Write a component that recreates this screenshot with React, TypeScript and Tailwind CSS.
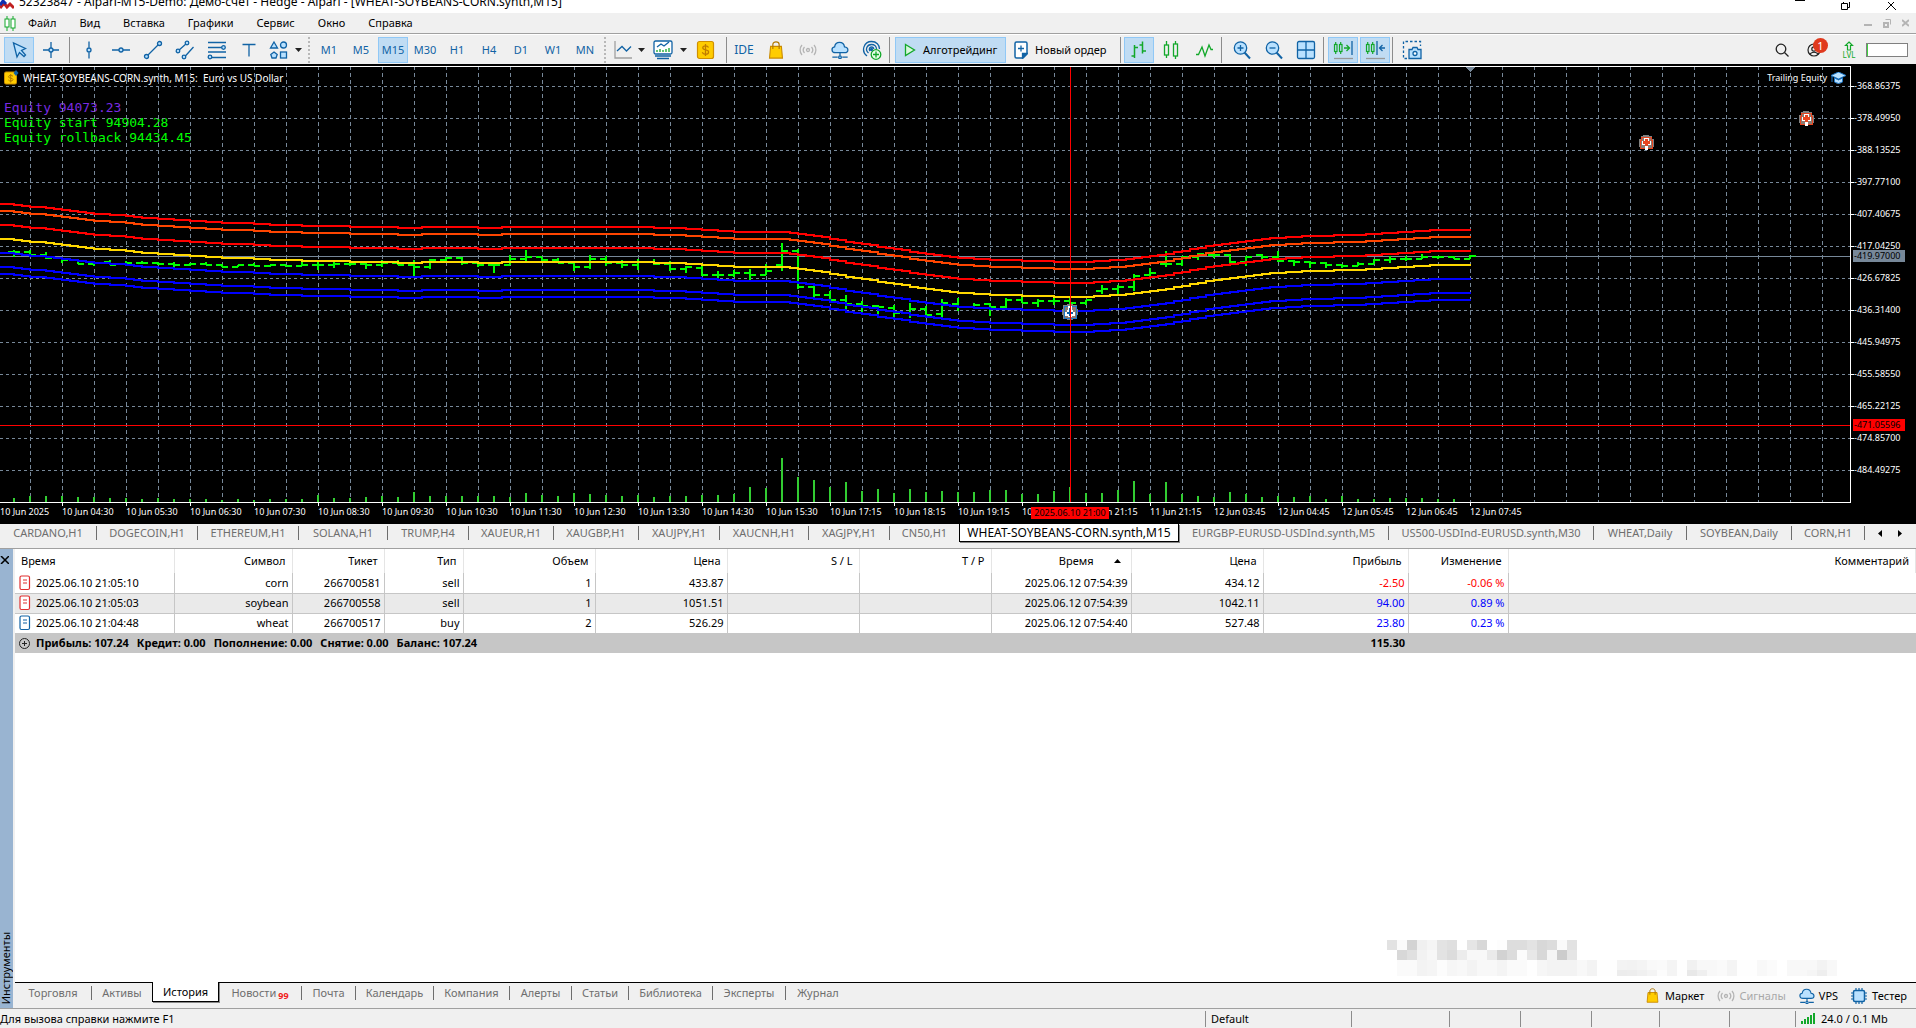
import React from "react";

const FONT = "font-['Noto_Sans','Open_Sans',sans-serif]";

/* ---------- chart data ---------- */

const BAR_STEP = 16;
const FIRST_BAR = 14;

// [bar index, y] of the upper envelope; the other envelopes run parallel to it
const ENVELOPE: [number, number][] = [
  [-1, 204], [0, 205], [1, 207], [2, 208], [3, 210], [4, 212], [5, 214], [6, 215], [7, 216], [8, 218], [9, 219],
  [10, 220], [11, 221], [12, 222], [13, 223], [14, 223], [15, 224], [16, 225], [17, 225], [18, 226], [20, 226],
  [21, 227], [23, 227], [24, 228], [25, 228], [26, 227], [28, 227], [29, 228], [30, 228], [31, 227], [39, 227],
  [40, 228], [41, 228], [42, 229], [43, 230], [44, 231], [45, 232], [48, 232], [49, 234], [50, 236], [51, 239],
  [52, 242], [53, 244], [54, 247], [55, 249], [56, 252], [57, 254], [58, 256], [59, 258], [60, 259], [61, 260],
  [62, 260], [63, 261], [64, 261], [65, 262], [67, 262], [68, 261], [69, 260], [70, 258], [71, 256], [72, 254],
  [73, 251], [74, 248], [75, 245], [76, 243], [77, 241], [78, 239], [79, 238], [80, 237], [81, 236], [82, 236],
  [83, 235], [84, 235], [85, 234], [86, 233], [87, 232], [88, 231], [89, 230], [91, 230],
];

const BANDS: [number, string][] = [
  [0, "#ff0000"],
  [7, "#ff4500"],
  [21, "#ff0000"],
  [49, "#0000ff"],
  [63, "#0000ff"],
  [70, "#0000ff"],
  [35, "#ffd700"],
];

// open, high, low, close in thirds of a pixel below y = 180
const BARS: [number, number, number, number][] = [
  [215, 210, 231, 216], [216, 211, 222, 224], [224, 216, 236, 234], [234, 231, 248, 240], [240, 237, 253, 252],
  [252, 244, 258, 249], [247, 240, 256, 255], [252, 243, 253, 249], [249, 243, 250, 249], [249, 245, 254, 252],
  [252, 246, 261, 255], [255, 250, 257, 252], [252, 246, 255, 255], [255, 253, 262, 261], [261, 255, 262, 255],
  [255, 250, 259, 258], [258, 254, 258, 255], [255, 254, 258, 258], [258, 246, 258, 255], [255, 246, 270, 255],
  [255, 246, 264, 252], [252, 246, 258, 252], [252, 250, 267, 255], [255, 240, 262, 249], [249, 240, 256, 255],
  [255, 240, 288, 261], [261, 238, 267, 240], [240, 232, 242, 234], [234, 231, 255, 249], [249, 247, 262, 255],
  [255, 253, 279, 255], [255, 225, 256, 237], [237, 210, 243, 231], [231, 230, 250, 240], [240, 234, 250, 249],
  [249, 247, 273, 261], [261, 225, 267, 237], [237, 228, 258, 249], [249, 240, 264, 255], [255, 238, 270, 246],
  [246, 238, 255, 252], [252, 243, 273, 267], [267, 258, 279, 261], [264, 258, 288, 285], [285, 273, 297, 285],
  [285, 270, 291, 279], [279, 267, 300, 285], [285, 252, 286, 273], [255, 189, 273, 213], [213, 207, 327, 321],
  [321, 318, 354, 345], [345, 333, 360, 360], [360, 345, 396, 372], [372, 363, 402, 378], [378, 376, 408, 381],
  [384, 375, 411, 399], [399, 369, 414, 387], [387, 378, 405, 405], [402, 357, 411, 369], [372, 354, 393, 381],
  [381, 369, 383, 375], [372, 370, 408, 381], [381, 354, 383, 360], [360, 351, 369, 369], [369, 357, 381, 363],
  [363, 354, 375, 363], [363, 348, 375, 369], [369, 360, 375, 360], [333, 315, 342, 327], [327, 315, 345, 321],
  [321, 282, 333, 288], [285, 264, 294, 279], [252, 213, 261, 252], [252, 228, 258, 231], [231, 219, 240, 223],
  [225, 222, 234, 225], [225, 223, 249, 246], [246, 228, 258, 231], [225, 222, 243, 231], [231, 213, 246, 243],
  [243, 241, 258, 246], [246, 244, 264, 249], [249, 247, 264, 255], [255, 252, 264, 258], [258, 246, 258, 252],
  [252, 236, 252, 240], [240, 228, 249, 237], [237, 228, 243, 237], [237, 222, 238, 231], [231, 230, 232, 231],
  [231, 228, 238, 237], [237, 225, 238, 228],
];

const VOLUMES = [
  4, 6, 6, 6, 5, 5, 4, 4, 3, 4, 3, 3, 3, 2, 3, 2, 3, 3, 3, 7, 4, 4, 5, 6, 5, 10, 6, 6, 6, 6, 6, 5, 9, 7, 6, 9, 8, 7,
  6, 7, 5, 6, 6, 7, 7, 8, 15, 14, 44, 25, 22, 15, 20, 11, 13, 9, 13, 10, 11, 10, 10, 12, 12, 8, 8, 11, 15, 9, 9, 12,
  21, 8, 20, 8, 6, 5, 10, 8, 5, 6, 5, 6, 3, 6, 3, 3, 4, 4, 4, 3, 3,
];

const TOP = 67; // page row where the plot begins; data rows are given from the page's top

function barX(k: number) {
  return FIRST_BAR + BAR_STEP * k;
}

function envelopeAt(k: number) {
  for (let i = 0; i < ENVELOPE.length - 1; i++) {
    const [a, ya] = ENVELOPE[i];
    const [b, yb] = ENVELOPE[i + 1];
    if (k >= a && k <= b) return ya + ((yb - ya) * (k - a)) / (b - a);
  }
  return 230;
}

function envelopePath(offset: number) {
  let d = "";
  for (let k = -1; k < 91; k += 0.5) {
    const y = Math.floor(envelopeAt(k)) + offset - TOP;
    d += d ? `V${y}` : `M${barX(k)} ${y}`;
    d += `H${barX(k + 0.5)}`;
  }
  return d;
}

const px = (v: number) => 180 - TOP + Math.round(v / 3);

const PRICES = [
  "-368.86375", "-378.49950", "-388.13525", "-397.77100", "-407.40675", "-417.04250", "-426.67825", "-436.31400",
  "-445.94975", "-455.58550", "-465.22125", "-474.85700", "-484.49275",
];

const TIMES = [
  "10 Jun 04:30", "10 Jun 05:30", "10 Jun 06:30", "10 Jun 07:30", "10 Jun 08:30", "10 Jun 09:30", "10 Jun 10:30",
  "10 Jun 11:30", "10 Jun 12:30", "10 Jun 13:30", "10 Jun 14:30", "10 Jun 15:30", "10 Jun 17:15", "10 Jun 18:15",
  "10 Jun 19:15", "10 Jun 20:15", "10 Jun 21:15", "11 Jun 21:15", "12 Jun 03:45", "12 Jun 04:45", "12 Jun 05:45",
  "12 Jun 06:45", "12 Jun 07:45",
];

function SellMark({ x, y }: { x: number; y: number }) {
  return (
    <g transform={`translate(${x - 7} ${y - 7})`} shapeRendering="crispEdges">
      <path d="M4 0h6v1h3v3h2v8H0V4h2V1h2z" fill="#808080" />
      <path d="M2 2h10v3h1v8H1V5h1z" fill="#8c7a72" stroke="#e8451f" strokeWidth="1" />
      <path d="M5 3h5v3h2v4H9v5H6v-5H3V6h2z" fill="#ffffff" />
      <path d="M6 4h3v2h2v3H9v2H6V9H4V6h2z" fill="#e8451f" />
    </g>
  );
}

function BuyMark({ x, y }: { x: number; y: number }) {
  return (
    <g transform={`translate(${x - 7} ${y - 7})`} shapeRendering="crispEdges">
      <path d="M4-1h6v1h4v4h1v6h-1v4h-4v1H4v-1H0v-4h-1V4h1V0h4z" fill="#808080" />
      <rect x="1" y="1" width="12" height="12" fill="#8c7a72" stroke="#1f78c8" strokeWidth="1" />
      <path d="M5 1h4v4h1v2h2v4H9v1H5v-1H2V7h2V5h1z" fill="#ffffff" />
      <path d="M6 3h2v4h2v2H8v2H6V9H4V7h2z" fill="#0a5fa8" />
    </g>
  );
}

function Plot() {
  const columns = Array.from({ length: 57 }, (_, i) => 30 + 32 * i);
  const rows = PRICES.map((_, i) => 19 + 32 * i);
  return (
    <svg className="absolute inset-0 h-full w-full" shapeRendering="crispEdges" aria-label="WHEAT-SOYBEANS-CORN M15">
      <g stroke="#778899" strokeWidth="1">
        {columns.map((x) => (
          <line key={x} x1={x + 0.5} x2={x + 0.5} y1="-1" y2="100%" strokeDasharray="4 3" />
        ))}
        {rows.map((y) => (
          <line key={y} x1="0" x2="100%" y1={y + 0.5} y2={y + 0.5} strokeDasharray="3 3" />
        ))}
        <line x1="0" x2="100%" y1="189.5" y2="189.5" />
      </g>
      {VOLUMES.map((v, k) => (
        <rect key={k} x={barX(k) - 1} y={435 - v} width="2" height={v} fill="#32cd32" />
      ))}
      <g fill="#00ff00">
        {BARS.map(([o, h, l, c], k) => (
          <g key={k}>
            <rect x={barX(k) - 1} y={px(h)} width="2" height={Math.max(2, px(l) - px(h))} />
            <rect x={barX(k) - 6} y={px(o) - 1} width="6" height="2" />
            <rect x={barX(k)} y={px(c) - 1} width="6" height="2" />
          </g>
        ))}
      </g>
      <g fill="none" strokeWidth="2">
        {BANDS.map(([offset, color]) => (
          <path key={offset} d={envelopePath(offset)} stroke={color} strokeLinecap="square" />
        ))}
      </g>
      <line x1="0" x2="100%" y1="358.5" y2="358.5" stroke="#ff0000" />
      <SellMark x={1646} y={75} />
      <SellMark x={1806} y={51} />
      <BuyMark x={1070} y={245} />
      <line x1="1070.5" x2="1070.5" y1="0" y2="100%" stroke="#ff0000" />
      <path d="M1466 0h9l-4.5 5z" fill="#778899" />
    </svg>
  );
}

/* ---------- icons ---------- */

const BLUE = "#1163a5";
const PALE = "#b9e1ff";
const GREEN = "#13a82a";

function Icon({ children, w = 20, h = 20 }: { children: React.ReactNode; w?: number; h?: number }) {
  return (
    <svg width={w} height={h} viewBox={`0 0 ${w} ${h}`} fill="none" stroke={BLUE} strokeWidth="1.3" className="shrink-0" aria-hidden="true">
      {children}
    </svg>
  );
}

const CursorIcon = () => (
  <Icon><path d="M4.500 3l3.500 14 2.500-4.500 4.500 4 1.500-1.500-4-4.500 4-2z" fill={PALE} /></Icon>
);
const CrossIcon = () => (
  <Icon><path d="M10 2v6M10 12v6M2 10h6M12 10h6" /><circle cx="10" cy="10" r="2" fill={PALE} /></Icon>
);
const VLineIcon = () => (
  <Icon><path d="M10 1.500v6M10 12.500v6" /><circle cx="10" cy="10" r="2" fill={PALE} /></Icon>
);
const HLineIcon = () => (
  <Icon><path d="M1 10h7M12 10h7" /><circle cx="10" cy="10" r="2" fill={PALE} /></Icon>
);
const TrendIcon = () => (
  <Icon><path d="M3.500 16.500L16.500 3.500" /><circle cx="3.500" cy="16.500" r="2" fill={PALE} /><circle cx="16.500" cy="3.500" r="2" fill={PALE} /></Icon>
);
const ChannelIcon = () => (
  <Icon><path d="M3 11L12 3M9 17.500L18.500 7" /><circle cx="3" cy="11" r="1.800" fill={PALE} /><circle cx="12" cy="3" r="1.800" fill={PALE} /><circle cx="9" cy="17" r="1.800" fill={PALE} /></Icon>
);
const FiboIcon = () => (
  <Icon><path d="M1 2.500h18M1 7.500h14M1 12h18M5 17.500h14" /><circle cx="16.500" cy="7.500" r="1.800" fill={PALE} /><circle cx="3" cy="17" r="1.800" fill={PALE} /></Icon>
);
const TextIcon = () => (
  <Icon><path d="M3.500 4.500h13M10 4.500v12" /></Icon>
);
const ShapesIcon = () => (
  <Icon>
    <g fill={PALE}>
      <path d="M5 2L8.500 8h-7z" /><circle cx="14.500" cy="5" r="3" />
      <path d="M5 12l3.200 2.500-1.200 3.500h-4l-1.200-3.500z" /><rect x="11.500" y="12" width="6" height="6" />
    </g>
  </Icon>
);
const LineMenuIcon = () => (
  <Icon><path d="M2 1v17h17" stroke="#a0a0a0" /><path d="M4 11l5-4.500 4.500 4.500 4.500-4.500" /></Icon>
);
const TemplateIcon = () => (
  <Icon>
    <rect x="1" y="1" width="18" height="13" rx="1.500" fill="#fff" /><path d="M2 16h16M4 18.500h12" />
    <path d="M4 7l4-3 3 2 5-4" /><path d="M4 12v-2M7 12v-3M10 12v-2M13 12v-3M16 12v-4" stroke={GREEN} />
  </Icon>
);
function DollarIcon({ size = 20 }: { size?: number }) {
  return (
    <svg width={size} height={size} viewBox="0 0 20 20" className="shrink-0" aria-hidden="true">
      <rect x="1.500" y="1.500" width="16" height="17" rx="2" fill="#ffcc00" stroke="#d09000" strokeWidth="1.200" />
      <path d="M12.500 7.500c-.5-1.200-1.500-1.700-3-1.700s-2.700.7-2.700 2 1.200 1.800 2.800 2.100 3 .8 3 2.200-1.300 2.200-3.100 2.200-2.800-.7-3.200-2M9.500 4v12" fill="none" stroke="#c07c00" strokeWidth="1.300" />
    </svg>
  );
}
function ChartBadgeIcon() {
  return (
    <svg width="15" height="15" className="shrink-0" aria-hidden="true">
      <rect x="0.500" y="2" width="12" height="12" rx="1.500" fill="#ffcc00" stroke="#d09000" />
      <path d="M9 6.300c-1-1.500-4.500-1.200-4.500.5 0 2 4.500.8 4.500 2.800 0 1.700-3.700 2-4.700.3M6.700 4v8.500" fill="none" stroke="#b07800" />
      <path d="M12 0l2.500 3-2.500 3-2.500-3z" fill="#1163a5" />
    </svg>
  );
}
function BagIcon({ size = 20 }: { size?: number }) {
  return (
    <svg width={size} height={size} viewBox="0 0 20 20" className="shrink-0" aria-hidden="true">
      <path d="M4 6h12l1.200 13H2.800z" fill="#ffcc00" stroke="#c98a00" strokeWidth="1.200" />
      <path d="M6.500 9V4c0-4 7-4 7 0v5" fill="none" stroke="#b07800" strokeWidth="1.300" />
    </svg>
  );
}
const SignalIcon = () => (
  <Icon w={18} h={14}>
    <g stroke="#b4b4b4"><circle cx="9" cy="7" r="1.500" /><path d="M5.500 4c-1.500 1.700-1.500 4.300 0 6M12.500 4c1.500 1.700 1.500 4.300 0 6M3 2C.5 4.700.5 9.300 3 12M15 2c2.500 2.700 2.500 7.300 0 10" /></g>
  </Icon>
);
function CloudIcon({ size = 20 }: { size?: number }) {
  return (
    <svg width={size} height={size} viewBox="0 0 20 20" fill="none" stroke={BLUE} strokeWidth="1.400" className="shrink-0" aria-hidden="true">
      <path d="M5 13c-5 0-5-6-1-6.500C4.500 3 7 1.500 9.500 1.500s5 1.500 5.500 5c5 .5 5 6.500 0 6.500z" fill={PALE} />
      <path d="M10 13v3.500M1.500 18h6M12.500 18h6" /><circle cx="10" cy="18" r="1.500" fill={PALE} />
    </svg>
  );
}
const RadarIcon = () => (
  <Icon>
    <path d="M5 16C-1.500 11 2 1.500 9.500 1.500c5 0 8 3.500 8 7.500" /><path d="M6.500 13C2.500 9.500 5 4.500 9.500 4.500c3 0 5 2 5 4.500" />
    <path d="M8 11c-1.500-2-.5-4 1.500-4 1.500 0 2.200.8 2.300 2" /><circle cx="9.500" cy="9.500" r="1" fill={BLUE} />
    <circle cx="14" cy="14.500" r="4.800" fill="#eaffea" stroke={GREEN} /><path d="M14 11.500v6M11 14.500h6" stroke={GREEN} />
  </Icon>
);
const PlayIcon = () => (
  <Icon w={12} h={14}><path d="M1.500 1.500l9 5.500-9 5.500z" fill="#d8f8dc" stroke={GREEN} /></Icon>
);
const NewOrderIcon = () => (
  <Icon w={14} h={18}><path d="M1 2.500q0-1.500 1.500-1.500h9q1.500 0 1.500 1.500V13l-4 4H2.500Q1 17 1 15.500z" fill="#fff" strokeWidth="1.500" /><path d="M7 4.500v6M4 7.500h6" /><path d="M13 12.500l-4.500 4.500v-4.500z" fill={BLUE} /></Icon>
);
const BarsIcon = () => (
  <Icon><path d="M5.500 5v13M2.500 16h3M5.500 7.500H9M13.500 1.500v12M10.500 5h3M13.500 11H17" stroke={GREEN} strokeWidth="1.500" /></Icon>
);
const CandlesIcon = () => (
  <Icon><path d="M5.500 1v4M5.500 15v3M14.500 1v3M14.500 16v3" stroke={GREEN} /><rect x="3.500" y="5" width="4" height="10" stroke={GREEN} /><rect x="12.500" y="4" width="4" height="12" stroke={GREEN} /></Icon>
);
const WaveIcon = () => (
  <Icon><path d="M2 14.500h2.500L8 7l3 9 4-11 2 4.500h2" stroke={GREEN} /></Icon>
);
function ZoomGlassIcon({ plus }: { plus?: boolean }) {
  return (
    <Icon><path d="M12.500 12.500L18 18.500" strokeWidth="2" /><circle cx="8.500" cy="8" r="6.200" fill={PALE} /><path d={plus ? "M5.500 8h6M8.500 5v6" : "M5.500 8h6"} /></Icon>
  );
}
const TilesIcon = () => (
  <Icon><rect x="1.500" y="1.500" width="17" height="17" rx="1.500" fill={PALE} /><path d="M10 1.500v17M1.500 10h17" /></Icon>
);
function ShiftIcon({ left }: { left?: boolean }) {
  return (
    <Icon w={22} h={20}>
      <path d="M2 18.500h19" stroke="#999" />
      <g stroke={GREEN} strokeWidth="1.200"><rect x="2.500" y="4.500" width="2.500" height="7" /><rect x="7.500" y="4.500" width="2.500" height="7" /><path d="M3.700 2v2.500M3.700 11.500V14M8.700 2v2.500M8.700 11.500V14" /></g>
      {left ? <path d="M13 1v14M21 8h-5M18.500 5l-3 3 3 3" /> : <><path d="M12 8h5M14.500 5l3 3-3 3" stroke={GREEN} /><path d="M20 1v14" /></>}
    </Icon>
  );
}
const CameraIcon = () => (
  <Icon><path d="M5 18.500H1.500v-17h17V6" strokeDasharray="2.500 2" /><path d="M7 9.500h3l1-2h4l1 2h3v9H7z" fill={PALE} /><circle cx="13" cy="13.500" r="2" fill="#fff" /></Icon>
);
const ChipIcon = () => (
  <Icon w={16} h={16}><path d="M5 0v16M8 0v16M11 0v16M0 5h16M0 8h16M0 11h16" strokeWidth="1.200" /><rect x="2.500" y="2.500" width="11" height="11" rx="1.500" fill={PALE} strokeWidth="1.500" /></Icon>
);
function OrderIcon({ color }: { color: string }) {
  return (
    <svg width="12" height="16" viewBox="0 0 12 16" fill="none" stroke={color} strokeWidth="1.200" className="shrink-0" aria-hidden="true">
      <rect x="1" y="1" width="9.500" height="13.500" rx="1.500" fill="#fff" /><path d="M4 5h4M4 8h4" />
    </svg>
  );
}

/* ---------- toolbar ---------- */

function Tool({ label, w = "w-8", active, children }: { label: string; w?: string; active?: boolean; children: React.ReactNode }) {
  return (
    <button
      aria-label={label}
      className={`${w} flex h-[26px] shrink-0 items-center justify-center ${active ? "border border-[#90c8f6] bg-[#c0dcf3]" : ""}`}
    >
      {children}
    </button>
  );
}

function Sep({ w = "w-[5px]" }: { w?: string }) {
  return (
    <div className={`${w} flex h-[26px] shrink-0 pl-px`}><div className="w-px bg-[#8c8c8c]" /></div>
  );
}

function Grip({ w }: { w: string }) {
  return (
    <div className={`${w} flex h-[26px] shrink-0 justify-center`}><div className="border-l-2 border-dotted border-[#b8b8b8]" /></div>
  );
}

function Caret({ w }: { w: string }) {
  return (
    <button aria-label="Список" className={`${w} flex h-[26px] shrink-0 items-center justify-center`}>
      <svg width="7" height="4" aria-hidden="true"><path d="M0 0h7L3.500 4z" fill="#222" /></svg>
    </button>
  );
}

const PERIODS = ["M1", "M5", "M15", "M30", "H1", "H4", "D1", "W1", "MN"];

function Toolbar() {
  return (
    <div className="flex h-[30px] items-center border-t border-white bg-[#f0f0f0] pl-1 pr-2">
      <Tool label="Курсор" w="w-[30px]" active><CursorIcon /></Tool>
      <Tool label="Перекрестие" w="w-[34px]"><CrossIcon /></Tool>
      <Sep />
      <Tool label="Вертикальная линия"><VLineIcon /></Tool>
      <Tool label="Горизонтальная линия"><HLineIcon /></Tool>
      <Tool label="Трендовая линия"><TrendIcon /></Tool>
      <Tool label="Канал"><ChannelIcon /></Tool>
      <Tool label="Фибоначчи"><FiboIcon /></Tool>
      <Tool label="Текст"><TextIcon /></Tool>
      <Tool label="Объекты" w="w-7"><ShapesIcon /></Tool>
      <Caret w="w-[11px]" />
      <Grip w="w-[9px]" />
      {PERIODS.map((p) => (
        <div key={p} className="flex w-8 shrink-0 justify-center text-[#1163a5]">
          <button className={p === "M15" ? "h-[26px] w-[30px] border border-[#90c8f6] bg-[#c0dcf3]" : "h-[26px] w-[30px]"}>{p}</button>
        </div>
      ))}
      <Grip w="w-[7px]" />
      <Tool label="Тип графика" w="w-[29px]"><LineMenuIcon /></Tool>
      <Caret w="w-[9px]" />
      <Tool label="Шаблоны" w="w-[34px]"><TemplateIcon /></Tool>
      <Caret w="w-[7px]" />
      <Tool label="Символы" w="w-[38px]"><DollarIcon /></Tool>
      <Sep w="w-[3px]" />
      <Tool label="IDE"><span className="text-[12px] text-[#1163a5]">IDE</span></Tool>
      <Tool label="Маркет"><BagIcon size={18} /></Tool>
      <Tool label="Сигналы"><SignalIcon /></Tool>
      <Tool label="VPS"><CloudIcon size={18} /></Tool>
      <Tool label="Копирование"><RadarIcon /></Tool>
      <Sep w="w-[7px]" />
      <button className="flex h-[26px] w-[111px] shrink-0 items-center gap-[7px] border border-[#90c8f6] bg-[#c0dcf3] pl-2">
        <PlayIcon />Алготрейдинг
      </button>
      <button className="flex h-[26px] w-[113px] shrink-0 items-center gap-[7px] pl-2"><NewOrderIcon />Новый ордер</button>
      <Sep />
      <Tool label="Бары" w="w-[30px]" active><BarsIcon /></Tool>
      <Tool label="Свечи" w="w-[34px]"><CandlesIcon /></Tool>
      <Tool label="Линия"><WaveIcon /></Tool>
      <Sep w="w-[6px]" />
      <Tool label="Увеличить"><ZoomGlassIcon plus /></Tool>
      <Tool label="Уменьшить"><ZoomGlassIcon /></Tool>
      <Tool label="Плитка"><TilesIcon /></Tool>
      <Sep w="w-[6px]" />
      <Tool label="Автопрокрутка" w="w-[30px]" active><ShiftIcon /></Tool>
      <div className="w-0.5 shrink-0" />
      <Tool label="Сдвиг графика" w="w-[30px]" active><ShiftIcon left /></Tool>
      <div className="w-px shrink-0" />
      <Sep />
      <Tool label="Снимок"><CameraIcon /></Tool>
      <div className="ml-auto flex items-center">
        <Tool label="Поиск">
          <svg width="14" height="14" fill="none" stroke="#222" strokeWidth="1.300" aria-hidden="true"><circle cx="6" cy="6" r="4.800" /><path d="M9.500 9.500l4 4" /></svg>
        </Tool>
        <button aria-label="Профиль" className="relative flex h-[26px] w-[34px] items-center justify-center">
          <svg width="16" height="16" fill="none" stroke="#222" strokeWidth="1.200" aria-hidden="true"><circle cx="7" cy="8" r="6" /><circle cx="7" cy="7" r="2.200" /><path d="M3 12.500c1-3 7-3 8 0" /></svg>
          <span className="absolute right-1 top-[1px] flex h-[15px] w-[15px] items-center justify-center rounded-full bg-[#e03a1e] text-[11px] leading-none text-white">1</span>
        </button>
        <button className="flex w-[34px] shrink-0 flex-col items-center text-[8px] leading-[8px] text-[#13a82a]">
          <svg width="10" height="10" fill="none" stroke={GREEN} strokeWidth="1.200" className="block shrink-0" aria-hidden="true"><path d="M5 1l3.500 3.500h-2V9h-3V4.500h-2z" /></svg>
          <span className="block">LVL</span>
        </button>
        <div className="h-[14px] w-[42px] border border-[#808080] bg-white"><div className="h-full w-px bg-[#40d040]" /></div>
      </div>
    </div>
  );
}

/* ---------- chart window ---------- */

function Chart() {
  return (
    <div className="flex border-t-2 border-black bg-black text-[9px] leading-[12px] text-white">
      <div className="min-w-0 flex-1">
        <div className="relative h-[437px] overflow-hidden border-b border-r border-t border-white">
          <div className="flex h-[21px] items-center justify-between pl-1 pr-1">
            <div className="flex items-center gap-1 text-[10px]"><ChartBadgeIcon />WHEAT-SOYBEANS-CORN.synth, M15:&nbsp; Euro vs US Dollar</div>
            <div className="flex items-center gap-1">
              Trailing Equity
              <svg width="15" height="12" aria-hidden="true"><path d="M7.500 0L15 3.500 7.500 7 0 3.500z" fill={PALE} stroke="#1f78c8" /><path d="M3.500 6v4q4 3 8 0V6l-4 2zM1 4v6" fill={PALE} stroke="#1f78c8" /></svg>
            </div>
          </div>
          <div className="pl-1 pt-[12px] font-['DejaVu_Sans_Mono',monospace] text-[13px] leading-[15px] text-[#00ff00]">
            <p className="text-[#7a2be2]">Equity 94073.23</p>
            <p>Equity start 94904.28</p>
            <p>Equity rollback 94434.45</p>
          </div>
          <Plot />
        </div>
        <div className="relative flex h-[21px] overflow-hidden">
          <div className="w-[62px] shrink-0 pt-[3px]"><span className="whitespace-nowrap">10 Jun 2025</span></div>
          {TIMES.map((t) => (
            <div key={t} className="w-16 shrink-0">
              <div className="h-[3px] w-px bg-white" />
              <span className="whitespace-nowrap">{t}</span>
            </div>
          ))}
          <div className="absolute left-[1031px] top-1 h-[12px] w-[78px] bg-[#ff0000] text-center text-black">2025.06.10 21:00</div>
        </div>
      </div>
      <div className="relative w-[65px] shrink-0 pt-1">
        {PRICES.map((p) => (
          <div key={p} className="flex h-8 items-center"><div className="h-px w-[3px] bg-white" />{p}</div>
        ))}
        <div className="absolute left-[2px] top-[184px] h-[12px] w-[52px] bg-[#778899] pl-px text-black">-419.97000</div>
        <div className="absolute left-[2px] top-[353px] h-[12px] w-[52px] bg-[#ff0000] pl-px text-black">-471.05596</div>
      </div>
    </div>
  );
}

const CHART_TABS: [string, string][] = [
  ["CARDANO,H1", "w-[97px]"], ["DOGECOIN,H1", "w-[101px]"], ["ETHEREUM,H1", "w-[101px]"], ["SOLANA,H1", "w-[89px]"],
  ["TRUMP,H4", "w-[81px]"], ["XAUEUR,H1", "w-[85px]"], ["XAUGBP,H1", "w-[85px]"], ["XAUJPY,H1", "w-[81px]"],
  ["XAUCNH,H1", "w-[89px]"], ["XAGJPY,H1", "w-[81px]"], ["CN50,H1", "w-[69px]"],
  ["WHEAT-SOYBEANS-CORN.synth,M15", "w-[220px]"],
  ["EURGBP-EURUSD-USDInd.synth,M5", "w-[210px]"], ["US500-USDInd-EURUSD.synth,M30", "w-[205px]"],
  ["WHEAT,Daily", "w-[93px]"], ["SOYBEAN,Daily", "w-[105px]"], ["CORN,H1", "w-[73px]"],
];

function ChartTabs() {
  return (
    <div className="flex h-[25px] items-start border-b border-[#a0a0a0] bg-[#f0f0f0] text-[11px] text-[#6e6e6e]">
      {CHART_TABS.map(([name, w]) =>
        name.startsWith("WHEAT-") ? (
          <button key={name} className={`${w} h-[18px] shrink-0 whitespace-nowrap border border-t-0 border-black bg-white text-[12px] text-black shadow-[1px_1px_0_#888]`}>
            {name}
          </button>
        ) : (
          <div key={name} className={`${w} flex h-[18px] shrink-0 items-center`}>
            <button className="flex-1 whitespace-nowrap">{name}</button>
            {name !== "CN50,H1" && <div className="h-[14px] w-px bg-[#6e6e6e]" />}
          </div>
        )
      )}
      <div className="flex h-[18px] items-center gap-4 pl-[13px]">
        <button aria-label="Назад"><svg width="4" height="7"><path d="M4 0v7L0 3.500z" fill="#000" /></svg></button>
        <button aria-label="Вперёд"><svg width="4" height="7"><path d="M0 0v7l4-3.500z" fill="#000" /></svg></button>
      </div>
    </div>
  );
}

/* ---------- toolbox ---------- */

const DEALS = [
  { open: "2025.06.10 21:05:10", sym: "corn", ticket: "266700581", type: "sell", vol: "1", p1: "433.87", close: "2025.06.12 07:54:39", p2: "434.12", profit: "-2.50", change: "-0.06 %" },
  { open: "2025.06.10 21:05:03", sym: "soybean", ticket: "266700558", type: "sell", vol: "1", p1: "1051.51", close: "2025.06.12 07:54:39", p2: "1042.11", profit: "94.00", change: "0.89 %" },
  { open: "2025.06.10 21:04:48", sym: "wheat", ticket: "266700517", type: "buy", vol: "2", p1: "526.29", close: "2025.06.12 07:54:40", p2: "527.48", profit: "23.80", change: "0.23 %" },
];

const HEADERS = ["Время", "Символ", "Тикет", "Тип", "Объем", "Цена", "S / L", "T / P", "Время", "Цена", "Прибыль", "Изменение", "Комментарий"];

function History() {
  return (
    <table className="w-full table-fixed border-collapse">
      <colgroup>
        <col className="w-[159px]" /><col className="w-[118px]" /><col className="w-[92px]" /><col className="w-[79px]" />
        <col className="w-[132px]" /><col className="w-[132px]" /><col className="w-[132px]" /><col className="w-[132px]" />
        <col className="w-[140px]" /><col className="w-[132px]" /><col className="w-[145px]" /><col className="w-[100px]" /><col />
      </colgroup>
      <thead>
        <tr className="h-6">
          {HEADERS.map((h, i) => (
            <th key={i} scope="col" className={i === 0 ? "border-r border-[#e5e5e5] pl-1.5 text-left font-normal" : "border-r border-[#e5e5e5] pr-1.5 text-right font-normal"}>
              {i === 8 ? (
                <span className="inline-flex items-center gap-5 pr-1">{h}<svg width="7" height="4" aria-hidden="true"><path d="M0 4h7L3.500 0z" fill="#000" /></svg></span>
              ) : h}
            </th>
          ))}
        </tr>
      </thead>
      <tbody>
        {DEALS.map((d, i) => {
          const tone = d.profit.startsWith("-") ? "text-[#ff0000]" : "text-[#0000ff]";
          const cells = [d.sym, d.ticket, d.type, d.vol, d.p1, "", "", d.close, d.p2, d.profit, d.change, ""];
          return (
            <tr key={d.ticket} className={i === 1 ? "h-5 border-b border-[#c6c6c6] bg-[#eaeaea]" : "h-5 border-b border-[#c6c6c6]"}>
              <td className="border-r border-[#c6c6c6] pl-1">
                <div className="flex items-center gap-[5px]"><OrderIcon color={d.type === "sell" ? "#e03030" : BLUE} />{d.open}</div>
              </td>
              {cells.map((c, j) => (
                <td key={j} className={j === 11 ? "" : j > 8 ? `border-r border-[#c6c6c6] pr-[3px] text-right ${tone}` : "border-r border-[#c6c6c6] pr-[3px] text-right"}>
                  {c}
                </td>
              ))}
            </tr>
          );
        })}
        <tr className="h-5 bg-[#c6c6c6] font-bold">
          <td colSpan={10} className="pl-1">
            <div className="flex items-center gap-1.5">
              <svg width="11" height="11" fill="none" stroke="#222" aria-hidden="true"><circle cx="5.500" cy="5.500" r="5" /><path d="M3 5.500h5M5.500 3v5" /></svg>
              <div className="flex gap-2">
                <span>Прибыль: 107.24</span><span>Кредит: 0.00</span><span>Пополнение: 0.00</span><span>Снятие: 0.00</span><span>Баланс: 107.24</span>
              </div>
            </div>
          </td>
          <td className="pr-[3px] text-right">115.30</td>
          <td colSpan={2} />
        </tr>
      </tbody>
    </table>
  );
}

// grey level per 10px block, row by row
const MOSAIC: [number, number, string[]][] = [
  [0, 10, "e2 fa d3 f0 f5 e3 df ff e5 d8 ff fd dd dd e3 d8 dc fa e2".split(" ")],
  [10, 10, "ff d8 e0 f2 f7 e3 dc ec f8 f8 ea d2 dc fc e8 d8 f5 cc e5".split(" ")],
  [20, 10, "ff fa fa f3 f5 fc f6 f8 f3 f8 f8 f4 fa fa fe f6 f3 f3 f3 f8 f3 fe fe f3 f2 f4 f9 fa f4 fe f1 f8 f8 fa f4 fe fe f8 fb ff f8 f8 f8 f3 f8".split(" ")],
  [30, 6, "ff fa fa f3 f5 fc f6 f8 f3 f8 f8 f4 fa fa fe f6 f3 f3 f3 f8 f3 fe fe ec ed f0 f4 fc f4 fe e8 ef f8 fa f4 fe fe f8 fb ff f8 f8 f5 ee f8".split(" ")],
];

function Mosaic() {
  return (
    <svg width="450" height="36" shapeRendering="crispEdges" aria-hidden="true">
      {MOSAIC.map(([y, h, row]) => row.map((c, i) => <rect key={`${y}-${i}`} x={i * 10} y={y} width="10" height={h} fill={`#${c}${c}${c}`} />))}
    </svg>
  );
}

const TOOL_TABS: [string, string][] = [
  ["Торговля", "w-[77px]"], ["Активы", "w-[60px]"], ["История", "w-[67px]"], ["Новости", "w-[83px]"], ["Почта", "w-[54px]"],
  ["Календарь", "w-[78px]"], ["Компания", "w-[76px]"], ["Алерты", "w-[62px]"], ["Статьи", "w-[57px]"],
  ["Библиотека", "w-[84px]"], ["Эксперты", "w-[73px]"], ["Журнал", "w-[64px]"],
];

function ToolTabs() {
  return (
    <div className="flex h-[26px] items-start bg-[#f0f0f0] text-[#6e6e6e]">
      {TOOL_TABS.map(([name, w]) =>
        name === "История" ? (
          <button key={name} className={`${w} h-5 border border-t-0 border-black bg-white text-black shadow-[1px_1px_0_#888]`}>{name}</button>
        ) : (
          <div key={name} className={`${w} flex h-5 items-center border-t border-black`}>
            <button className="flex flex-1 items-center justify-center gap-0.5 whitespace-nowrap">
              {name}
              {name === "Новости" && <span className="pt-1.5 text-[9px] font-bold leading-3 text-[#f02020]">99</span>}
            </button>
            {name !== "Активы" && name !== "Журнал" && <div className="h-[14px] w-px bg-[#6e6e6e]" />}
          </div>
        )
      )}
      <div className="flex h-[26px] flex-1 items-center justify-end gap-[13px] border-t border-black pr-[9px] text-black">
        <a href="#market" className="flex items-center gap-[5px]"><BagIcon size={15} />Маркет</a>
        <a href="#signals" className="flex items-center gap-1 text-[#a8a8a8]"><SignalIcon />Сигналы</a>
        <a href="#vps" className="flex items-center gap-1"><CloudIcon size={16} />VPS</a>
        <a href="#tester" className="flex items-center gap-[5px]"><ChipIcon />Тестер</a>
      </div>
    </div>
  );
}

const STATUS = ["w-[146px]", "w-[98px]", "w-[71px]", "w-[71px]", "w-[68px]", "w-[70px]", "w-[66px]"];

export default function App() {
  return (
    <div className={`flex min-h-screen flex-col overflow-hidden bg-white text-[11px] leading-4 text-black ${FONT}`}>
      <header>
        <div className="flex h-[13px] items-end overflow-hidden pb-[3px]">
          <svg width="14" height="10" className="shrink-0" aria-hidden="true"><path d="M0 8l4-5 3 4 3-3 4 4" fill="none" stroke="#c02020" strokeWidth="3" /><path d="M0 5l3-4 3 3" fill="none" stroke="#1030b0" strokeWidth="3" /></svg>
          <h1 className="ml-[5px] whitespace-nowrap text-[12px]">52323847 - Alpari-M15-Demo: Демо-счет - Hedge - Alpari - [WHEAT-SOYBEANS-CORN.synth,M15]</h1>
          <div className="ml-auto flex items-end gap-[35px] pr-[19px]">
            <button aria-label="Свернуть" className="mb-[9px] h-px w-[10px] bg-black" />
            <button aria-label="Развернуть" className="-mb-1"><svg width="11" height="12" fill="none" stroke="#000"><path d="M1.500 1.500h6v6h-6zM3.500 1V-.5h6v6H8" /></svg></button>
            <button aria-label="Закрыть" className="-mb-1"><svg width="11" height="12" stroke="#000"><path d="M0-2l10 10M10-2L0 8" /></svg></button>
          </div>
        </div>
        <nav className="flex h-5 items-center bg-[#f0f0f0] pl-1">
          <svg width="12" height="15" fill="#fff" stroke={GREEN} aria-hidden="true"><path d="M3 0v15M9 0v15" /><rect x="1" y="3" width="4" height="8" /><rect x="7" y="3" width="4" height="9" /></svg>
          <button className="ml-3">Файл</button>
          <button className="ml-[23px]">Вид</button>
          <button className="ml-[23px]">Вставка</button>
          <button className="ml-[23px]">Графики</button>
          <button className="ml-[23px]">Сервис</button>
          <button className="ml-[23px]">Окно</button>
          <button className="ml-[23px]">Справка</button>
          <div className="ml-auto flex items-center gap-[11px] pr-[7px]">
            <button aria-label="Свернуть окно" className="mt-1 h-0.5 w-2 bg-[#b4b4b4]" />
            <button aria-label="Восстановить окно"><svg width="8" height="9" fill="none" stroke="#b4b4b4"><rect x="1" y="4" width="4" height="4" strokeWidth="2" /><path d="M2.500 .5h5v5" /></svg></button>
            <button aria-label="Закрыть окно"><svg width="7" height="8" stroke="#b4b4b4" strokeWidth="2"><path d="M0 1l7 6M7 1L0 7" /></svg></button>
          </div>
        </nav>
        <div className="h-px bg-[#a0a0a0]" />
        <Toolbar />
      </header>
      <Chart />
      <ChartTabs />
      <div className="flex flex-1">
        <aside className="flex w-[13px] flex-col items-start justify-between bg-[#99b4d1] pb-1 pt-[7px]">
          <button aria-label="Закрыть панель"><svg width="9" height="8" stroke="#000" strokeWidth="1.500"><path d="M1 0l8 8M9 0L1 8" /></svg></button>
          <span className="rotate-180 text-[11px] leading-[11px] [writing-mode:vertical-rl]">Инструменты</span>
        </aside>
        <div className="w-0.5 bg-[#f0f0f0]" />
        <section className="flex min-w-0 flex-1 flex-col">
          <History />
          <div className="mt-auto flex justify-end pb-[6px] pr-[79px]"><Mosaic /></div>
          <ToolTabs />
        </section>
      </div>
      <footer className="flex h-5 items-center border-t border-[#a0a0a0] bg-[#f0f0f0]">
        <span className="flex-1">Для вызова справки нажмите F1</span>
        {STATUS.map((w, i) => (
          <div key={i} className={`${w} h-4 border-l border-[#8c8c8c] pl-[5px]`}>{i === 0 && "Default"}</div>
        ))}
        <div className="flex h-4 w-[121px] items-center gap-1.5 border-l border-[#8c8c8c] pl-[5px]">
          <svg width="14" height="11" fill={GREEN} shapeRendering="crispEdges" aria-hidden="true"><path d="M0 8h2v3H0zM3 6h2v5H3zM6 4h2v7H6zM9 2h2v9H9zM12 0h2v11h-2z" /></svg>
          24.0 / 0.1 Mb
        </div>
      </footer>
    </div>
  );
}
